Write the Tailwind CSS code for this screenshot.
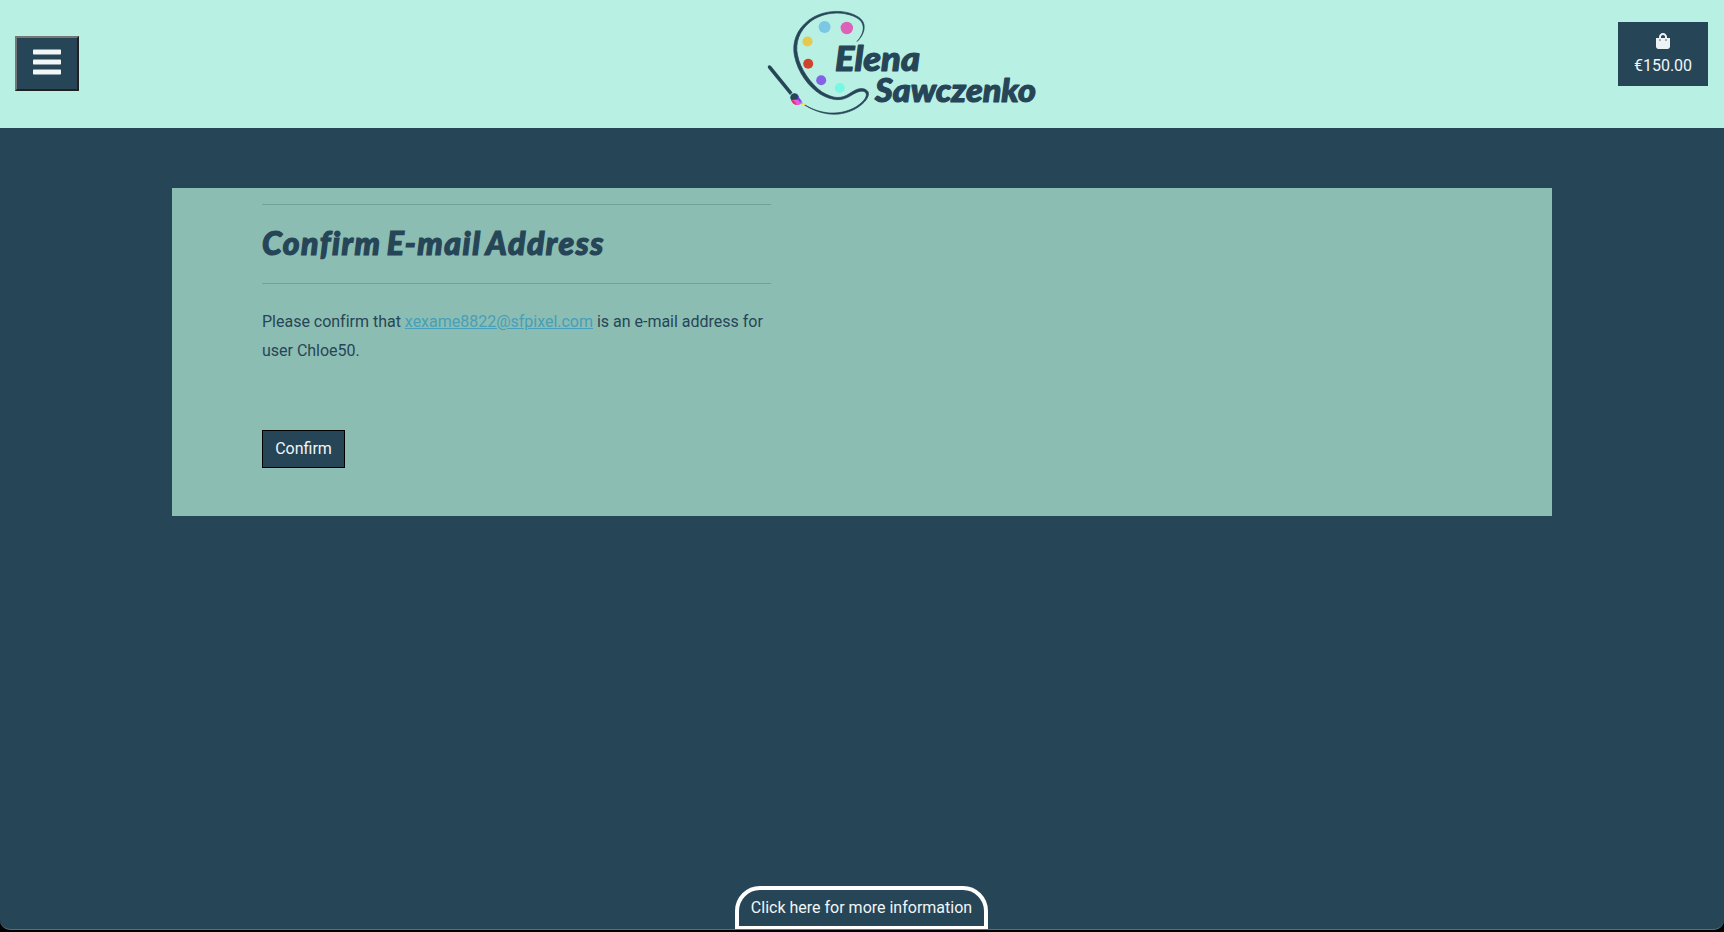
<!DOCTYPE html>
<html lang="en">
<head>
<meta charset="utf-8">
<title>Confirm E-mail Address</title>
<script src="https://cdn.jsdelivr.net/npm/@tailwindcss/browser@4"></script>
</head>
<body class="bg-black font-[Roboto,sans-serif] text-base text-[#264557] h-[932px] overflow-hidden">
<div class="flex flex-col h-[930px] bg-[#264557] rounded-b-[10px] border-b border-[#54707e] overflow-hidden">
  <header class="h-32 shrink-0 bg-[#b8f1e4] flex items-start pl-[15px] pr-4">
    <button class="mt-9 w-16 h-[55px] bg-[#264557] border-2 border-t-[#767676] border-l-[#767676] border-r-[#212121] border-b-[#212121] flex items-start justify-center pt-[11px]" aria-label="Menu">
      <svg width="28" height="27" viewBox="0 0 28 27" fill="#f1f6f7"><rect y=".5" width="28" height="5" rx=".7"/><rect y="10.5" width="28" height="5" rx=".7"/><rect y="20.5" width="28" height="5" rx=".7"/></svg>
    </button>
    <svg class="ml-[671px]" width="300" height="128" viewBox="750 0 300 128" role="img" aria-label="Elena Sawczenko">
      <g fill="#264557">
        <path stroke="#264557" stroke-width=".7" d="M857 41.5C864 35 868 24 859 17.5C847 9 824 9 809 20C796 30 792 43 794.5 56C798 73 809 87 820 94C832 101 842 101.500 851 95.500C858 91 863 90 865.500 92.500C869 96 862 104 853 108.500C837 116 820 114 804 104.500C820 115 838 117.500 854 109.500C865 104 871 95 867.500 91C863 86.500 857 88.500 849.500 93.500C841 99.500 833 98.500 822 92C811 84 800 69 797.500 55C795 43 799 31 810 22C824 11 845 10.500 858 18.500C867 25 863 35 857 41.500Z"/>
        <path d="M768 68C767 65.500 769.500 64.500 771 66L792.500 92.500L790 95Z"/>
      </g>
      <g>
        <circle cx="824.6" cy="27" r="6" fill="#7cc6e6"/>
        <circle cx="846.8" cy="28" r="6.200" fill="#dc61b7"/>
        <circle cx="807.5" cy="41.500" r="5.100" fill="#e4c94e"/>
        <circle cx="808.2" cy="63.700" r="5" fill="#d0432c"/>
        <circle cx="821.2" cy="80.300" r="5" fill="#8462e5"/>
        <circle cx="839.8" cy="88" r="5" fill="#77f8e2"/>
      </g>
      <circle cx="794.500" cy="97.500" r="4.200" fill="#264557"/>
      <path d="M791.500 100C793 105 798 106.500 801 103.500L803 104L801 99.500L797.500 99.500Z" fill="#e557df"/>
      <path d="M798 95.500L802 102.500L800.500 102.500L797.500 99Z" fill="#743be6"/>
      <path d="M791 99.500C792 103.500 794 104.500 797 105L794 101Z" fill="#df335f"/>
      <path d="M800.500 100.500L803 103.500L801 104.500Z" fill="#69b7ea"/>
      <path d="M801.500 103.500L805.500 103.500L804.500 105.500L802 105Z" fill="#f3e954"/>
      <g fill="#264557" stroke="#264557" stroke-width="1.1" stroke-linejoin="round" font-family="Lato, sans-serif" font-weight="900" font-style="italic">
        <text x="835" y="70.500" font-size="34" textLength="85" lengthAdjust="spacingAndGlyphs">Elena</text>
        <text x="875" y="101.500" font-size="32" textLength="161" lengthAdjust="spacingAndGlyphs">Sawczenko</text>
      </g>
    </svg>
    <a class="ml-auto mt-[22px] w-[90px] h-16 bg-[#264557] text-[#f1f6f7] flex flex-col items-center pt-[11px]">
      <svg width="14" height="16" viewBox="0 0 448 512" fill="#edf3f4"><path d="M352 160v-32C352 57.420 294.579 0 224 0 153.420 0 96 57.420 96 128v32H0v272c0 44.183 35.817 80 80 80h288c44.183 0 80-35.817 80-80V160h-96zm-192-32c0-35.290 28.710-64 64-64s64 28.710 64 64v32H160v-32zm160 120c-13.255 0-24-10.745-24-24s10.745-24 24-24 24 10.745 24 24-10.745 24-24 24zm-192 0c-13.255 0-24-10.745-24-24s10.745-24 24-24 24 10.745 24 24-10.745 24-24 24z"/></svg>
      <span class="mt-[5px] leading-6">€150.00</span>
    </a>
  </header>
  <main class="mx-[172px] mt-[60px] h-[328px] shrink-0 bg-[#8cbdb2] pl-[90px] pt-4">
    <div class="w-[509px]">
      <hr class="border-[#70a398]">
      <h1 class="h-[78px] pt-[17px] font-[Lato,sans-serif] font-black italic text-[32px] leading-[42px] whitespace-nowrap tracking-[1.5px] [word-spacing:-3px] [-webkit-text-stroke:1.2px_#264557]">Confirm E-mail Address</h1>
      <hr class="border-[#70a398]">
      <p class="mt-6 leading-[28.8px] tracking-[-.01px]">Please confirm that <a class="text-[#479fb9] underline">xexame8822@sfpixel.com</a> is an e-mail address for user Chloe50.</p>
      <button class="mt-16 w-[83px] h-[38px] border border-black bg-[#264557] text-[#f1f6f7]">Confirm</button>
    </div>
  </main>
  <button class="mt-auto ml-[735px] w-[253px] h-11 shrink-0 -mb-px border-4 border-white rounded-t-[25px] text-[#f1f6f7] whitespace-nowrap">Click here for more information</button>
</div>
</body>
</html>
